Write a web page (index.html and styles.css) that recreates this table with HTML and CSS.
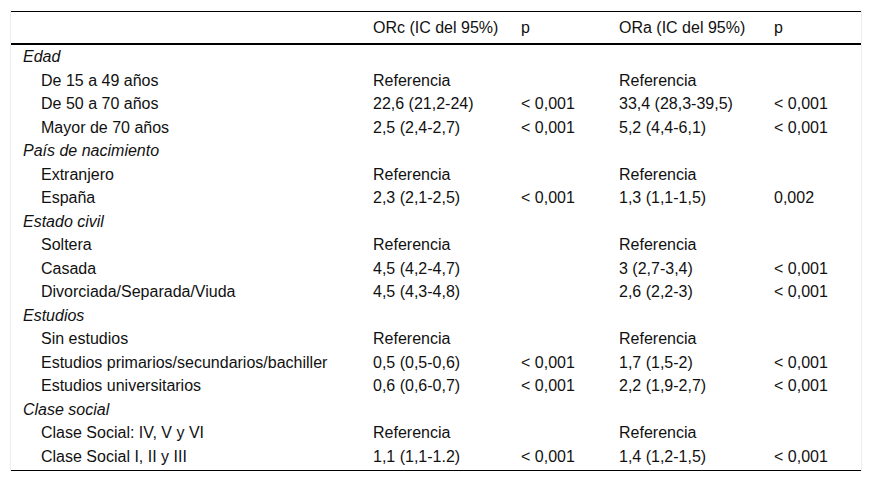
FILE: index.html
```html
<!DOCTYPE html>
<html lang="es">
<head>
<meta charset="utf-8">
<title>Tabla</title>
<link rel="stylesheet" href="styles.css">
</head>
<body>
<div class="wrap">
<table class="data">
<colgroup>
<col class="c1"><col class="c2"><col class="c3"><col class="c4"><col class="c5">
</colgroup>
<thead>
<tr><th></th><th>ORc (IC del 95%)</th><th>p</th><th>ORa (IC del 95%)</th><th>p</th></tr>
</thead>
<tbody>
<tr class="cat"><td>Edad</td><td></td><td></td><td></td><td></td></tr>
<tr><td class="sub">De 15 a 49 años</td><td>Referencia</td><td></td><td>Referencia</td><td></td></tr>
<tr><td class="sub">De 50 a 70 años</td><td>22,6 (21,2-24)</td><td>&lt; 0,001</td><td>33,4 (28,3-39,5)</td><td>&lt; 0,001</td></tr>
<tr><td class="sub">Mayor de 70 años</td><td>2,5 (2,4-2,7)</td><td>&lt; 0,001</td><td>5,2 (4,4-6,1)</td><td>&lt; 0,001</td></tr>
<tr class="cat"><td>País de nacimiento</td><td></td><td></td><td></td><td></td></tr>
<tr><td class="sub">Extranjero</td><td>Referencia</td><td></td><td>Referencia</td><td></td></tr>
<tr><td class="sub">España</td><td>2,3 (2,1-2,5)</td><td>&lt; 0,001</td><td>1,3 (1,1-1,5)</td><td>0,002</td></tr>
<tr class="cat"><td>Estado civil</td><td></td><td></td><td></td><td></td></tr>
<tr><td class="sub">Soltera</td><td>Referencia</td><td></td><td>Referencia</td><td></td></tr>
<tr><td class="sub">Casada</td><td>4,5 (4,2-4,7)</td><td></td><td>3 (2,7-3,4)</td><td>&lt; 0,001</td></tr>
<tr><td class="sub">Divorciada/Separada/Viuda</td><td>4,5 (4,3-4,8)</td><td></td><td>2,6 (2,2-3)</td><td>&lt; 0,001</td></tr>
<tr class="cat"><td>Estudios</td><td></td><td></td><td></td><td></td></tr>
<tr><td class="sub">Sin estudios</td><td>Referencia</td><td></td><td>Referencia</td><td></td></tr>
<tr><td class="sub">Estudios primarios/secundarios/bachiller</td><td>0,5 (0,5-0,6)</td><td>&lt; 0,001</td><td>1,7 (1,5-2)</td><td>&lt; 0,001</td></tr>
<tr><td class="sub">Estudios universitarios</td><td>0,6 (0,6-0,7)</td><td>&lt; 0,001</td><td>2,2 (1,9-2,7)</td><td>&lt; 0,001</td></tr>
<tr class="cat"><td>Clase social</td><td></td><td></td><td></td><td></td></tr>
<tr><td class="sub">Clase Social: IV, V y VI</td><td>Referencia</td><td></td><td>Referencia</td><td></td></tr>
<tr class="last"><td class="sub">Clase Social I, II y III</td><td>1,1 (1,1-1.2)</td><td>&lt; 0,001</td><td>1,4 (1,2-1,5)</td><td>&lt; 0,001</td></tr>
</tbody>
</table>
</div>
</body>
</html>
```
FILE: styles.css
```css
html, body {
  margin: 0;
  padding: 0;
  background: #fff;
}
body {
  font-family: "Liberation Sans", Arial, sans-serif;
  font-size: 16px;
  color: #111;
}
.wrap {
  margin: 10px 0 0 10px;
  width: 850px;
  padding-top: 1px;
  border-left: 1px solid #ececec;
  border-right: 1px solid #ececec;
}
.data {
  width: 850px;
  table-layout: fixed;
  border-collapse: separate;
  border-spacing: 0;
}
.c1 { width: 350px; }
.c2 { width: 148px; }
.c3 { width: 98px; }
.c4 { width: 155px; }
.c5 { width: 99px; }
.data th {
  font-weight: normal;
  text-align: left;
  white-space: nowrap;
  height: 31px;
  padding: 0 12px;
  line-height: 18px;
  vertical-align: middle;
  border-top: 1px solid #000;
  border-bottom: 2px solid #000;
  box-sizing: content-box;
}
.data td {
  padding: 0 12px;
  height: 23.5px;
  line-height: 23.5px;
  white-space: nowrap;
  vertical-align: middle;
}
.data .cat td {
  font-style: italic;
}
.data td.sub {
  padding-left: 30px;
}
.data .last td {
  border-bottom: 1px solid #000;
  padding-bottom: 2px;
}
```
